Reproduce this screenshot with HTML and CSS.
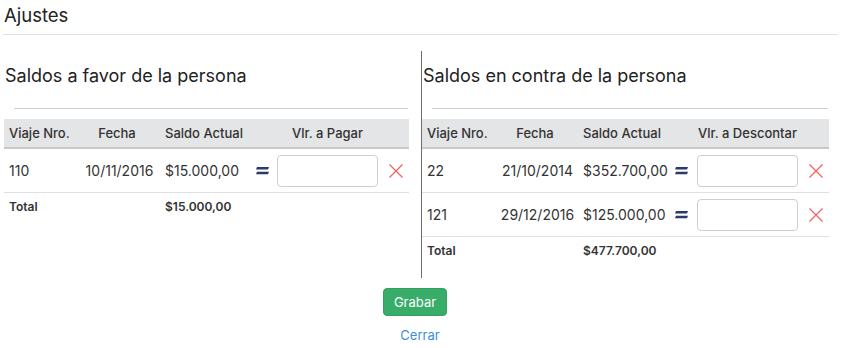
FILE: index.html
```html
<!DOCTYPE html>
<html lang="es">
<head>
<meta charset="utf-8">
<title>Ajustes</title>
<link rel="stylesheet" href="styles.css">
</head>
<body>
<div class="title">Ajustes</div>
<div class="columns">
  <section class="col col-left">
    <h2 class="heading">Saldos a favor de la persona</h2>
    <hr class="rule">
    <div class="grid">
      <div class="th">Viaje Nro.</div>
      <div class="th center">Fecha</div>
      <div class="th">Saldo Actual</div>
      <div class="th"></div>
      <div class="th center">Vlr. a Pagar</div>
      <div class="th"></div>

      <div class="td">110</div>
      <div class="td center">10/11/2016</div>
      <div class="td">$15.000,00</div>
      <div class="td eq"><svg width="13" height="8" viewBox="0 0 13 8"><path d="M1 0h12l-1 2.4H0z M1 4.8h12l-1 2.4H0z" fill="#2b3a6b"/></svg></div>
      <div class="td inp"><input class="field" type="text"></div>
      <div class="td x"><svg width="14" height="14" viewBox="0 0 14 14"><path d="M0.5 0.5L13.5 13.5M13.5 0.5L0.5 13.5" stroke="#f0605d" stroke-width="1.2" fill="none"/></svg></div>

      <div class="tf">Total</div>
      <div class="tf"></div>
      <div class="tf">$15.000,00</div>
      <div class="tf"></div>
      <div class="tf"></div>
      <div class="tf"></div>
    </div>
  </section>
  <section class="col col-right">
    <h2 class="heading">Saldos en contra de la persona</h2>
    <hr class="rule">
    <div class="grid grid-right">
      <div class="th">Viaje Nro.</div>
      <div class="th center">Fecha</div>
      <div class="th">Saldo Actual</div>
      <div class="th"></div>
      <div class="th center">Vlr. a Descontar</div>
      <div class="th"></div>

      <div class="td">22</div>
      <div class="td center">21/10/2014</div>
      <div class="td">$352.700,00</div>
      <div class="td eq"><svg width="13" height="8" viewBox="0 0 13 8"><path d="M1 0h12l-1 2.4H0z M1 4.8h12l-1 2.4H0z" fill="#2b3a6b"/></svg></div>
      <div class="td inp"><input class="field" type="text"></div>
      <div class="td x"><svg width="14" height="14" viewBox="0 0 14 14"><path d="M0.5 0.5L13.5 13.5M13.5 0.5L0.5 13.5" stroke="#f0605d" stroke-width="1.2" fill="none"/></svg></div>

      <div class="td">121</div>
      <div class="td center">29/12/2016</div>
      <div class="td">$125.000,00</div>
      <div class="td eq"><svg width="13" height="8" viewBox="0 0 13 8"><path d="M1 0h12l-1 2.4H0z M1 4.8h12l-1 2.4H0z" fill="#2b3a6b"/></svg></div>
      <div class="td inp"><input class="field" type="text"></div>
      <div class="td x"><svg width="14" height="14" viewBox="0 0 14 14"><path d="M0.5 0.5L13.5 13.5M13.5 0.5L0.5 13.5" stroke="#f0605d" stroke-width="1.2" fill="none"/></svg></div>

      <div class="tf">Total</div>
      <div class="tf"></div>
      <div class="tf">$477.700,00</div>
      <div class="tf"></div>
      <div class="tf"></div>
      <div class="tf"></div>
    </div>
  </section>
</div>
<div class="actions">
  <button class="btn" type="button">Grabar</button>
  <a class="link" href="#">Cerrar</a>
</div>
</body>
</html>
```
FILE: styles.css
```css
* { box-sizing: border-box; }
html, body { margin: 0; padding: 0; background: #fff; }
body {
  font-family: Inter, "Open Sans", sans-serif;
  color: #333;
  width: 842px;
  height: 348px;
  overflow: hidden;
}
.title {
  font-size: 18.5px;
  line-height: 28px;
  padding: 1px 0 5px 1px;
  margin: 0 4px 0 3px;
  border-bottom: 1px solid #e2e2e2;
  color: #222;
}
.columns {
  display: flex;
  margin-top: 16px;
}
.col-left {
  width: 421px;
  padding-left: 4px;
  padding-right: 12px;
}
.col-right {
  width: 421px;
  border-left: 1px solid #6e6e6e;
  padding-right: 13px;
  padding-bottom: 14px;
}
.heading {
  margin: 13px 0 0 1px;
  font-size: 18px;
  line-height: 24px;
  font-weight: 400;
  color: #222;
}
.rule {
  margin: 20px 1px 10px 10px;
  border: 0;
  border-top: 1px solid #cfcfcf;
  height: 0;
}
.grid {
  display: grid;
  grid-template-columns: 70px 86px 91px 22px 109px 1fr;
  font-size: 13px;
}
.grid-right { grid-template-columns: 70px 86px 92px 23px 109px 1fr; }
.th {
  background: #e4e5e6;
  height: 30px;
  line-height: 28px;
  border-bottom: 2px solid #c8c8c8;
  padding-left: 5px;
  font-weight: 500;
  white-space: nowrap;
}
.center { text-align: center; padding-left: 0; }
.td {
  height: 44px;
  border-bottom: 1px solid #e0e0e0;
  display: flex;
  align-items: center;
  padding-left: 5px;
  font-size: 14px;
  white-space: nowrap;
}
.td.center { justify-content: center; }
.td.eq { padding-left: 5px; }
.td.inp { padding-left: 4px; }
.td.x { padding-left: 7px; }
.field {
  width: 101px;
  height: 32px;
  border: 1px solid #cfcfcf;
  border-radius: 4px;
  background: #fff;
}
.tf {
  height: 27px;
  line-height: 27px;
  padding-left: 5px;
  font-weight: 600;
  font-size: 12px;
  white-space: nowrap;
}
.actions {
  display: flex;
  flex-direction: column;
  align-items: center;
  margin-top: 10px;
  padding-right: 12px;
}
.btn {
  width: 64px;
  height: 28px;
  background: #38ad69;
  color: #fff;
  border: 1px solid #32a161;
  border-radius: 4px;
  font-family: Inter, "Open Sans", sans-serif;
  font-size: 13px;
  padding: 0;
}
.link {
  margin-top: 11px;
  margin-left: 10px;
  color: #3b8fd8;
  text-decoration: none;
  font-size: 13px;
  line-height: 16px;
}
```
